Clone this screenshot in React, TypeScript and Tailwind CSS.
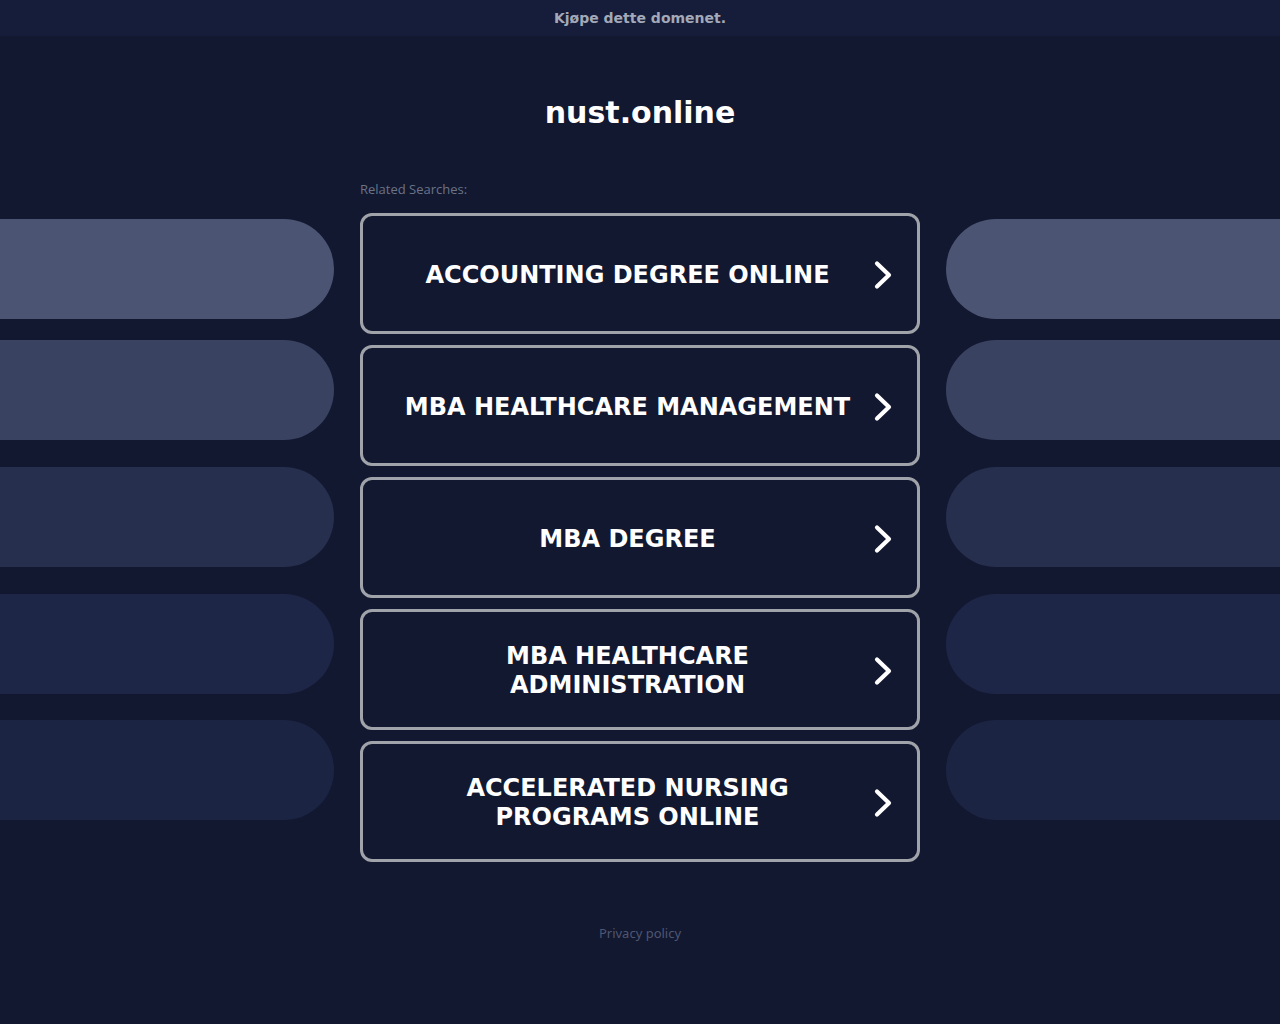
import React from "react";

const items = [
  "ACCOUNTING DEGREE ONLINE",
  "MBA HEALTHCARE MANAGEMENT",
  "MBA DEGREE",
  "MBA HEALTHCARE ADMINISTRATION",
  "ACCELERATED NURSING PROGRAMS ONLINE",
];

const pills = [
  { c: "bg-[#4b5472]", m: "mt-[6px]" },
  { c: "bg-[#3a4262]", m: "mt-[21px]" },
  { c: "bg-[#272f4e]", m: "mt-[27px]" },
  { c: "bg-[#1e2647]", m: "mt-[27px]" },
  { c: "bg-[#1c2444]", m: "mt-[26px]" },
];

function Chevron() {
  return (
    <svg width="24" height="30" viewBox="0 0 24 30" className="shrink-0">
      <path
        d="M5 3.5 L17 15 L5 26.5"
        fill="none"
        stroke="#ffffff"
        strokeWidth="4.2"
        strokeLinecap="round"
        strokeLinejoin="round"
      />
    </svg>
  );
}

export default function App() {
  return (
    <div
      className="min-h-[1024px] w-full bg-[#121830] text-white"
      style={{ fontFamily: '"DejaVu Sans", sans-serif' }}
    >
      <div className="h-9 bg-[#151d3a] flex items-center justify-center">
        <span className="text-[14px] font-bold text-[#a3a9b8]">Kjøpe dette domenet.</span>
      </div>
      <h1 className="mt-[57px] text-center text-[30px] leading-[40px] font-bold text-white">
        nust.online
      </h1>
      <div className="mx-auto mt-[48px] w-[560px]">
        <div
          className="text-[13px] leading-[16px] text-[#6b7387]"
          style={{ fontFamily: '"Open Sans", sans-serif' }}
        >
          Related Searches:
        </div>
      </div>
      <div className="mt-[16px] flex gap-[26px]">
        <div className="w-[334px] flex flex-col">
          {pills.map((p, i) => (
            <div key={i} className={`${p.m} h-[100px] rounded-r-[50px] ${p.c}`} />
          ))}
        </div>
        <div className="w-[560px] flex flex-col gap-[11px]">
          {items.map((t) => (
            <div
              key={t}
              className="h-[121px] rounded-[12px] border-[3px] border-[#a0a3a9] bg-[#121830] flex items-center pl-5 pr-[21px] pt-[3px]"
            >
              <div className="flex-1 flex justify-center">
                <div className="max-w-[462px] text-center text-[24px] leading-[29px] font-bold text-white">
                  {t}
                </div>
              </div>
              <Chevron />
            </div>
          ))}
        </div>
        <div className="w-[334px] flex flex-col">
          {pills.map((p, i) => (
            <div key={i} className={`${p.m} h-[100px] rounded-l-[50px] ${p.c}`} />
          ))}
        </div>
      </div>
      <div
        className="mt-[63px] text-center text-[13px] leading-[16px] text-[#4e5672]"
        style={{ fontFamily: '"Noto Sans", sans-serif' }}
      >
        Privacy policy
      </div>
    </div>
  );
}
